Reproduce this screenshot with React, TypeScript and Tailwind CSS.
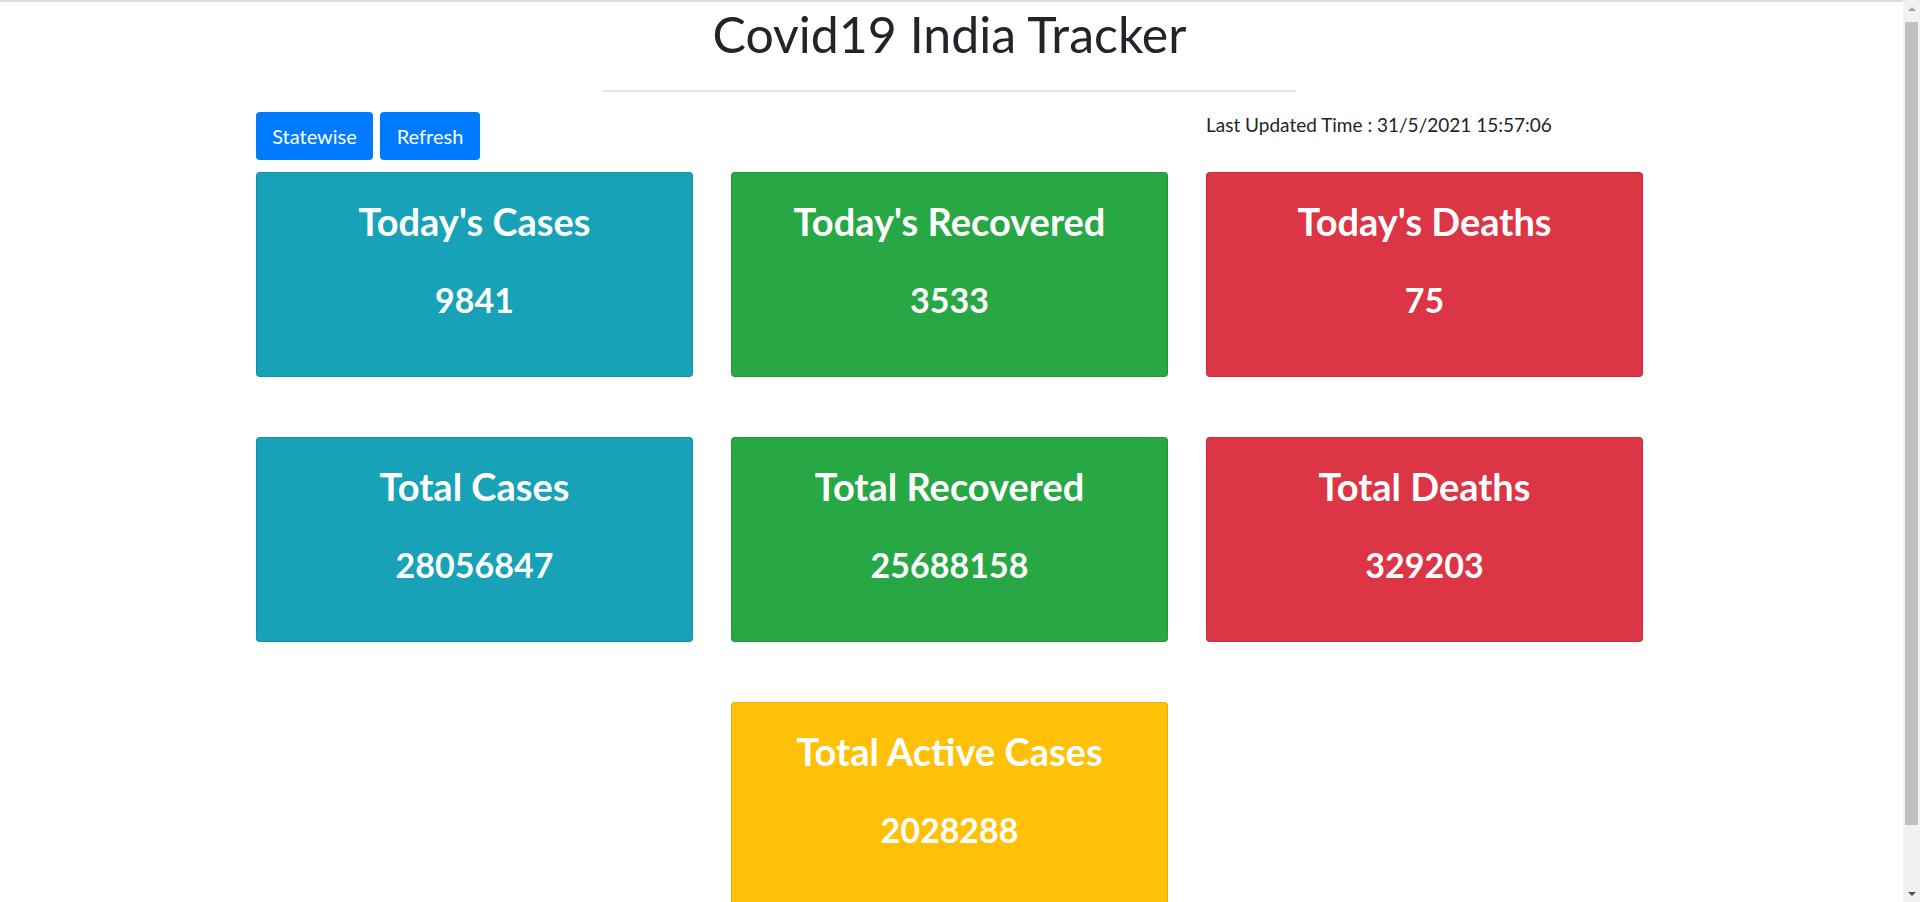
const cards = [
  { title: "Today's Cases", value: '9841', bg: 'bg-[#17a2b8]' },
  { title: "Today's Recovered", value: '3533', bg: 'bg-[#28a745]' },
  { title: "Today's Deaths", value: '75', bg: 'bg-[#dc3545]' },
  { title: 'Total Cases', value: '28056847', bg: 'bg-[#17a2b8]' },
  { title: 'Total Recovered', value: '25688158', bg: 'bg-[#28a745]' },
  { title: 'Total Deaths', value: '329203', bg: 'bg-[#dc3545]' },
];

function StatCard({ title, value, bg }: { title: string; value: string; bg: string }) {
  return (
    <div className={`${bg} h-[205px] rounded border border-black/10 text-white text-center pt-[24px]`}>
      <h3 className="text-[38px] leading-[48px] font-bold">{title}</h3>
      <p className="mt-[33px] text-[34px] leading-[44px] font-bold">{value}</p>
    </div>
  );
}

// fake browser scrollbar, the reference shows one on the right
function Scrollbar() {
  return (
    <div className="fixed right-0 top-0 h-screen w-[17px] bg-[#f1f1f1] flex flex-col items-center">
      <div className="h-[17px] flex items-center justify-center">
        <div className="w-0 h-0 border-x-[4px] border-x-transparent border-b-[4px] border-b-[#a3a3a3]" />
      </div>
      <div className="w-[13px] h-[803px] mt-[5px] bg-[#c1c1c1]" />
      <div className="mt-auto h-[17px] flex items-center justify-center">
        <div className="w-0 h-0 border-x-[4px] border-x-transparent border-t-[4px] border-t-[#505050]" />
      </div>
    </div>
  );
}

export default function App() {
  return (
    <div className="min-h-screen bg-white border-t-2 border-[#dcdcdc] text-[#212529] font-['Lato',sans-serif] pb-[68px] pr-[21px]">
      <h1 className="text-center text-[50px] leading-[60px] font-normal pt-[2px]">Covid19 India Tracker</h1>

      <div className="w-[1387px] mx-auto">
        <hr className="w-1/2 mx-auto mt-[26px] border-t-2 border-[#e5e5e5]" />

        <div className="grid grid-cols-3 gap-x-[38px] items-start mt-[20px]">
          <div className="flex gap-[7px]">
            <button className="h-[48px] w-[117px] rounded bg-[#007bff] text-white text-[20px]">Statewise</button>
            <button className="h-[48px] w-[100px] rounded bg-[#007bff] text-white text-[20px]">Refresh</button>
          </div>
          <div />
          <span className="text-[19px] leading-[26px]">Last Updated Time : 31/5/2021 15:57:06</span>
        </div>

        <div className="grid grid-cols-3 gap-x-[38px] gap-y-[60px] mt-[12px]">
          {cards.map((c) => (
            <StatCard key={c.title} {...c} />
          ))}
          <div />
          <StatCard title="Total Active Cases" value="2028288" bg="bg-[#ffc107]" />
        </div>
      </div>

      <Scrollbar />
    </div>
  );
}
